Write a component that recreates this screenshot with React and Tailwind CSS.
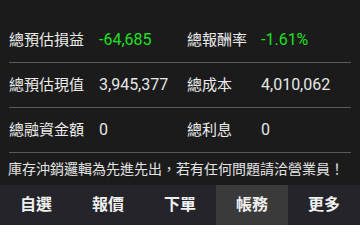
import React from "react";

const rows = [
  [
    { label: "總預估損益", value: "-64,685", green: true },
    { label: "總報酬率", value: "-1.61%", green: true },
  ],
  [
    { label: "總預估現值", value: "3,945,377" },
    { label: "總成本", value: "4,010,062" },
  ],
  [
    { label: "總融資金額", value: "0" },
    { label: "總利息", value: "0" },
  ],
];

const tabs = ["自選", "報價", "下單", "帳務", "更多"];

const Cell = ({ label, value, green, left }) => (
  <div className={`flex items-center ${left ? "w-[178px]" : "flex-1"}`}>
    <span className={`${left ? "w-[90px]" : "w-[74px]"} text-[15px] text-[#ececec]`}>{label}</span>
    <span className={`text-[16px] ${green ? "text-[#1fe01f]" : "text-[#e6e6e6]"}`}>{value}</span>
  </div>
);

export default function App() {
  return (
    <div
      className="w-[360px] h-[225px] bg-[#1b1b1b] flex flex-col overflow-hidden"
      style={{ fontFamily: "Roboto, 'Noto Sans CJK TC', sans-serif" }}
    >
      <div className="pt-[18px] px-[9px]">
        {rows.map((row, i) => (
          <div
            key={i}
            className="h-[45px] flex items-center border-b border-[#5a5a5a] leading-none"
          >
            <Cell {...row[0]} left />
            <Cell {...row[1]} />
          </div>
        ))}
      </div>
      <div className="h-[32px] flex items-center pl-[8px] text-[14px] text-[#e4e4e4] leading-none">
        庫存沖銷邏輯為先進先出，若有任何問題請洽營業員！
      </div>
      <div className="h-[40px] flex bg-[#24242a]">
        {tabs.map((t) => (
          <div
            key={t}
            className={`flex-1 flex items-center justify-center text-[16px] font-bold text-[#f0f0f0] ${
              t === "帳務" ? "bg-[#3a3a3a]" : ""
            }`}
          >
            {t}
          </div>
        ))}
      </div>
    </div>
  );
}
